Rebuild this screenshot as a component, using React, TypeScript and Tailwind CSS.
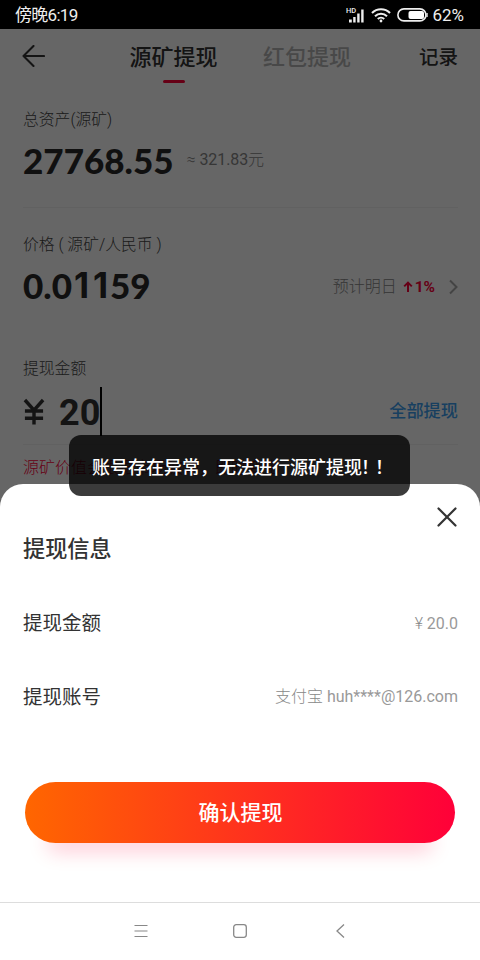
const userAccount = 'huh****@126.com';

const withdrawInfo = [
  { label: '提现金额', prefix: '¥', value: '20.0' },
  { label: '提现账号', prefix: '支付宝', value: userAccount },
];

function StatusBar() {
  return (
    <div className="flex h-[29px] shrink-0 items-center justify-between bg-black pt-[2px] pr-4 pl-[15px] text-[17px] text-[#eee]">
      <span className="tracking-[-0.7px]">傍晚6:19</span>
      <div className="flex items-center">
        {/* 信号 */}
        <svg width="20" height="18" viewBox="0 0 20 18" fill="#eee" className="mr-[5px] mb-[2px]">
          <text x="0" y="6.5" fontSize="7.5" fontWeight="500">HD</text>
          <rect x="3" y="13.5" width="2.8" height="3" />
          <rect x="7.2" y="11" width="2.4" height="5.5" />
          <rect x="11.2" y="7.5" width="2.4" height="9" />
          <rect x="15.2" y="3.5" width="2.4" height="13" />
        </svg>
        {/* WiFi */}
        <svg width="20" height="16" viewBox="0 0 20 16" fill="none" stroke="#eee" strokeWidth="2.1" className="mr-[6px] mb-[2px]">
          <path d="M1 6 A12.6 12.6 0 0 1 19 6" />
          <path d="M4 9.2 A8.6 8.6 0 0 1 16 9.2" />
          <path d="M6.8 12 A4.6 4.6 0 0 1 13.2 12" />
          <circle cx="10" cy="14" r="1.4" fill="#eee" stroke="none" />
        </svg>
        {/* 电池 */}
        <svg width="31" height="14" viewBox="0 0 31 14" className="mr-1 mb-[1px]">
          <rect x="0.9" y="0.9" width="28" height="12" rx="6" fill="none" stroke="#eee" strokeWidth="1.6" />
          <rect x="11.5" y="3" width="15.5" height="8" rx="2" fill="#fff" />
          <rect x="29.3" y="5" width="1.4" height="4" fill="#eee" />
        </svg>
        <span>62%</span>
      </div>
    </div>
  );
}

// Lato 的 1 带底衬线，单独换成 Inter
function BigNumber({ value }: { value: string }) {
  return (
    <span className="flex font-[Lato] text-[35px] leading-[40px] font-black text-[#2a2a2a]">
      {value.split('').map((c, i) =>
        c === '1' ? (
          <span key={i} className="w-[19px] text-center font-[Inter] text-[35px] font-bold">{c}</span>
        ) : (
          <span key={i}>{c}</span>
        ),
      )}
    </span>
  );
}

function WithdrawPage() {
  return (
    <div className="flex flex-1 flex-col bg-white pr-[22px] pl-[23px] text-[#333]">
      {/* 顶部导航 */}
      <div className="flex h-[56px] items-center">
        <svg width="23" height="22" viewBox="0 0 23 22" fill="none" stroke="#333" strokeWidth="2.1" strokeLinecap="round" strokeLinejoin="round" className="mb-[2px] -ml-px">
          <path d="M11.5 1 L1.5 11 L11.5 21 M1.5 11 H22" />
        </svg>
        <div className="relative ml-[84.5px] pt-px text-[22px] font-medium">
          源矿提现
          <span className="absolute -bottom-[9px] left-[33px] h-[3px] w-[22px] rounded-full bg-[#ff0039]" />
        </div>
        <div className="ml-[45.5px] pt-px text-[22px] font-medium text-[#b5b5b5]">红包提现</div>
        <div className="ml-auto pt-[2px] text-[19.5px] font-medium">记录</div>
      </div>

      {/* 总资产 */}
      <div className="h-[123px] border-b border-[#f2f2f2] pt-[23px]">
        <p className="text-[15.8px] leading-6 font-light text-[#444]">总资产(源矿)</p>
        <div className="mt-[8px] flex items-center">
          <BigNumber value="27768.55" />
          <span className="ml-[13px] text-[16px] font-light text-[#888]">
            ≈ <span className="font-normal tracking-[-0.1px]">321.83</span>元
          </span>
        </div>
      </div>

      {/* 价格 */}
      <div className="h-[125px] pt-[25px]">
        <p className="text-[15.8px] leading-6 font-light text-[#444]">价格 ( 源矿/人民币 )</p>
        <div className="mt-[8px] flex items-center">
          <BigNumber value="0.01159" />
          <span className="ml-auto pt-[4px] text-[16px] font-light text-[#888]">预计明日</span>
          <svg width="10" height="12" viewBox="0 0 10 12" fill="none" stroke="#ff0039" strokeWidth="2" className="mt-[4px] ml-[6px]">
            <path d="M5 11 V2 M1.2 5.4 L5 1.6 L8.8 5.4" />
          </svg>
          <span className="ml-[2px] pt-[5px] text-[15.5px] font-bold text-[#ff0039]">1%</span>
          <svg width="9" height="16" viewBox="0 0 9 16" fill="none" stroke="#aaa" strokeWidth="2" className="mt-[4px] ml-[14px]">
            <path d="M1 1.5 L7.5 8 L1 14.5" />
          </svg>
        </div>
      </div>

      {/* 提现金额 */}
      <div className="h-[112px] border-b border-[#f2f2f2] pt-[24px]">
        <p className="text-[15.8px] leading-6 font-light text-[#444]">提现金额</p>
        <div className="mt-[6px] flex h-[49px] items-center">
          <svg width="22" height="27" viewBox="0 0 23 27" fill="none" stroke="#333" strokeWidth="3.6">
            <path d="M2 1.5 L11.5 12 L21 1.5 M11.5 11 V27 M2 13 H21 M2 20.5 H21" />
          </svg>
          <span className="ml-[14px] pt-[2px] text-[36px] font-bold">20</span>
          <span className="h-[49px] w-[2px] bg-black" />
          <span className="ml-auto pt-px text-[17.2px] font-medium text-[#3e9ff0]">全部提现</span>
        </div>
      </div>
      <p className="mt-[11px] text-[16px] leading-6 font-light whitespace-nowrap text-[#ff0039]">源矿价值会根据市场波动，即时变化</p>
    </div>
  );
}

function WithdrawSheet() {
  return (
    <div className="absolute inset-x-0 bottom-0 flex h-[418px] flex-col rounded-t-[23px] bg-white pr-[22px] pl-[23px] text-[#333]">
      <svg width="20" height="20" viewBox="0 0 20 20" fill="none" stroke="#333" strokeWidth="2.2" strokeLinecap="round" className="mt-[23px] mr-[1.5px] self-end">
        <path d="M1.5 1.5 L18.5 18.5 M18.5 1.5 L1.5 18.5" />
      </svg>
      <h2 className="mt-[6px] text-[22.2px] leading-8 font-medium">提现信息</h2>
      <div className="mt-[22px]">
        {withdrawInfo.map((item) => (
          <div key={item.label} className="flex h-[73.5px] items-center justify-between">
            <span className="text-[19.5px]">{item.label}</span>
            <span className="text-[16px] font-light text-[#888]">
              {item.prefix} <span className="font-normal text-[#999]">{item.value}</span>
            </span>
          </div>
        ))}
      </div>
      <button className="mr-[3px] ml-[2px] mt-[48px] h-[61px] shrink-0 rounded-full bg-linear-to-r/srgb from-[#ff6600] to-[#ff0039] pt-[3px] pl-px text-[21px] font-medium text-white shadow-[0_30px_20px_-22px_rgba(255,0,57,0.22)]">
        确认提现
      </button>
    </div>
  );
}

function SystemNav() {
  return (
    <div className="flex h-[58px] shrink-0 items-center border-t border-[#ddd] bg-white pb-[2px] pl-[134px]">
      <svg width="14" height="14" viewBox="0 0 14 14" stroke="#888" strokeWidth="1.2">
        <path d="M0.5 1.5 H13.5 M0.5 7 H13.5 M0.5 12.5 H13.5" />
      </svg>
      <svg width="14" height="14" viewBox="0 0 14 14" fill="none" stroke="#888" strokeWidth="1.3" className="ml-[85px]">
        <rect x="0.7" y="0.7" width="12.6" height="12.6" rx="2.5" />
      </svg>
      <svg width="9" height="14" viewBox="0 0 9 14" fill="none" stroke="#888" strokeWidth="1.3" className="ml-[89px]">
        <path d="M8 0.5 L1 7 L8 13.5" />
      </svg>
    </div>
  );
}

export default function App() {
  return (
    <div className="relative flex h-[960px] w-[480px] flex-col overflow-hidden font-[Roboto,'Noto_Sans_CJK_SC',sans-serif]">
      <StatusBar />
      <div className="relative flex flex-1 flex-col overflow-hidden">
        <WithdrawPage />
        {/* 遮罩 */}
        <div className="absolute inset-0 bg-black/60" />
        <WithdrawSheet />
        {/* 提示 */}
        <div className="absolute top-[406px] left-[69px] flex h-[61px] w-[341px] items-center rounded-xl bg-black/77 pt-[3px] pl-[23px] text-[18px] font-medium whitespace-nowrap text-white">
          账号存在异常，无法进行源矿提现
          <span className="-ml-px tracking-[-4px]">！！</span>
        </div>
      </div>
      <SystemNav />
    </div>
  );
}
